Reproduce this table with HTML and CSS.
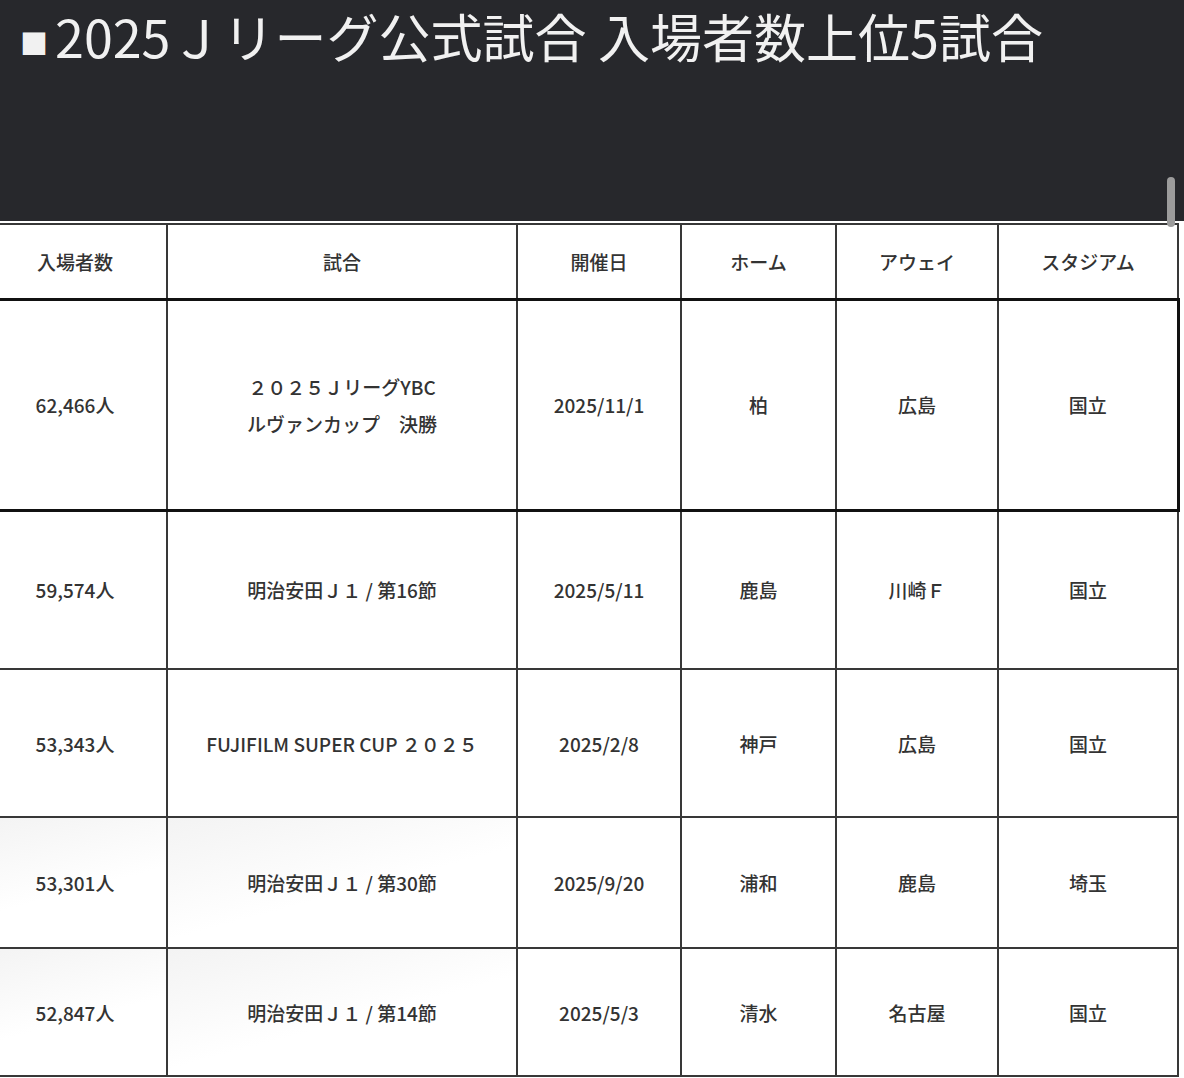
FILE: index.html
```html
<!DOCTYPE html>
<html lang="ja">
<head>
<meta charset="utf-8">
<title>2025Ｊリーグ公式試合 入場者数上位5試合</title>
<link rel="stylesheet" href="styles.css">
</head>
<body>
<div class="hero">
  <h1 class="title"><span class="mark">■</span>2025Ｊリーグ公式試合 入場者数上位5試合</h1>
</div>
<div class="scroll-thumb"></div>
<div class="table-wrap">
<table class="stats">
  <colgroup>
    <col class="c-att"><col class="c-match"><col class="c-date"><col class="c-home"><col class="c-away"><col class="c-stadium">
  </colgroup>
  <thead>
    <tr class="row-head">
      <th>入場者数</th><th>試合</th><th>開催日</th><th>ホーム</th><th>アウェイ</th><th>スタジアム</th>
    </tr>
  </thead>
  <tbody>
    <tr class="row-1 highlight">
      <td>62,466人</td><td>２０２５ＪリーグYBC<br>ルヴァンカップ　決勝</td><td>2025/11/1</td><td>柏</td><td>広島</td><td>国立</td>
    </tr>
    <tr class="row-2">
      <td>59,574人</td><td>明治安田Ｊ１ / 第16節</td><td>2025/5/11</td><td>鹿島</td><td>川崎Ｆ</td><td>国立</td>
    </tr>
    <tr class="row-3">
      <td>53,343人</td><td>FUJIFILM SUPER CUP ２０２５</td><td>2025/2/8</td><td>神戸</td><td>広島</td><td>国立</td>
    </tr>
    <tr class="row-4 shaded">
      <td>53,301人</td><td>明治安田Ｊ１ / 第30節</td><td>2025/9/20</td><td>浦和</td><td>鹿島</td><td>埼玉</td>
    </tr>
    <tr class="row-5 shaded">
      <td>52,847人</td><td>明治安田Ｊ１ / 第14節</td><td>2025/5/3</td><td>清水</td><td>名古屋</td><td>国立</td>
    </tr>
  </tbody>
</table>
</div>
</body>
</html>
```

FILE: styles.css
```css
html, body {
  margin: 0;
  padding: 0;
  background: #ffffff;
}

body {
  font-family: "Noto Sans CJK JP", "Noto Sans", sans-serif;
  color: #333333;
  overflow: hidden;
  position: relative;
}

.hero {
  height: 221px;
  background: #27282c;
  box-sizing: border-box;
  padding: 0 0 0 20px;
}

.title {
  margin: 0;
  font-size: 52px;
  font-weight: 400;
  line-height: 72px;
  color: #f1f1f1;
  white-space: nowrap;
}

.mark {
  font-size: 28px;
  margin-right: 7px;
  position: relative;
  top: -3px;
}

.scroll-thumb {
  position: absolute;
  left: 1167px;
  top: 177px;
  width: 8px;
  height: 50px;
  border-radius: 4px;
  background: #9c9c9c;
}

.table-wrap {
  padding-top: 2px;
  margin-left: -18px;
}

.stats {
  border-collapse: collapse;
  table-layout: fixed;
  width: 1195px;
  background: #ffffff;
}

.c-att { width: 184px; }
.c-match { width: 350px; }
.c-date { width: 164px; }
.c-home { width: 155px; }
.c-away { width: 162px; }
.c-stadium { width: 180px; }

.stats th,
.stats td {
  border: 2px solid #383838;
  text-align: center;
  vertical-align: middle;
  font-size: 19px;
  font-weight: 500;
  color: #333333;
  padding: 0 8px;
  line-height: 37px;
}

.row-head { height: 75px; }
.row-1 { height: 211px; }
.row-2 { height: 159px; }
.row-3 { height: 148px; }
.row-4 { height: 131px; }
.row-5 { height: 128px; }

.shaded td:first-child,
.shaded td:nth-child(2) {
  background: linear-gradient(165deg, #f3f3f3 0%, #ffffff 55%);
}

.highlight td {
  border-top: 3.5px solid #111111;
  border-bottom: 3.5px solid #111111;
}

.highlight td:last-child {
  border-right: 3.5px solid #111111;
}
```
